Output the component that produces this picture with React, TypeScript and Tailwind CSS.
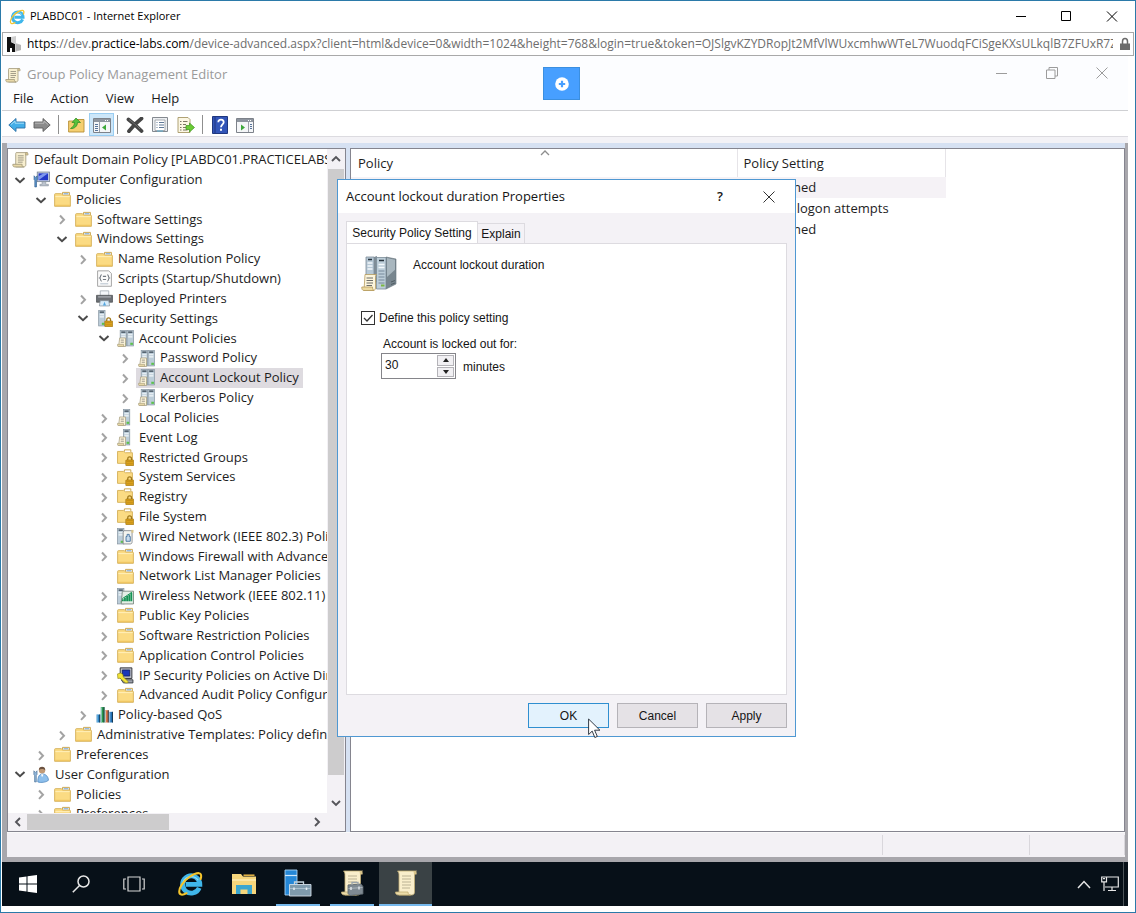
import React, { useState } from "react";
import clsx from "clsx";

type IconProps = { className?: string };

const IeIcon = ({ className }: IconProps) => (
  <svg viewBox="0 0 24 24" className={className} fill="none">
    <path d="M20.5 15.5a8 8 0 1 1 .6-3.2H8" stroke="#3fb6ea" strokeWidth="4.400" />
    <path d="M5.5 10.5a8 8 0 0 1 14-2" stroke="#8fdcf8" strokeWidth="1.2" />
    <path
      d="M21.8 7.5c1-3.200.6-5.300-1.500-5.500C16 1.600 8 7 4.300 12.800c-2.800 4.400-3 8.400-.4 9 1.400.3 3.200-.3 5-1.300"
      stroke="#f5c52c"
      strokeWidth="1.9"
      strokeLinecap="round"
    />
  </svg>
);

const SiteIcon = () => (
  <svg viewBox="0 0 16 16" className="size-4">
    <path d="M1 1h4v5l4 2v8H6v-4H4v4H1z" fill="#111" />
    <path d="M5 1l5-1v7l5 2v5l-6 2V8L5 6z" fill="#cfcfcf" />
    <path d="M10 8l5 1v5l-5 1z" fill="#b5b5b5" />
  </svg>
);

const ScrollIcon = ({ className }: IconProps) => (
  <svg viewBox="0 0 16 16" className={className}>
    <path d="M4 1.500h10.500c-1 .3-1.500 1.200-1.500 2V13c0 1-.8 2-2 2H3.500V3C3.500 2 3.600 1.600 4 1.500z" fill="#f8efcf" stroke="#a39a7c" strokeWidth=".8" />
    <path d="M12.800 1.500c1.800-.3 2.600.6 2.300 2.300h-2.300z" fill="#d9c68f" stroke="#a39a7c" strokeWidth=".6" />
    <path d="M.8 12.500h8.700c-.3 1.500.4 2.300 1.500 2.500H2.500C1.200 15 .6 14 .8 12.500z" fill="#e9d9a8" stroke="#a39a7c" strokeWidth=".8" />
    <path d="M5.500 4.500H11M5.500 6.500H11M5.500 8.500H11M5.500 10.500H10" stroke="#8f8a7a" strokeWidth=".8" />
  </svg>
);

const FolderIcon = ({ className }: IconProps) => (
  <svg viewBox="0 0 16 16" className={className}>
    <path d="M8 3.500V1.300h6.500V4" fill="#fff" stroke="#c9a54d" strokeWidth=".9" />
    <path d="M.6 14.400V3.200c0-.4.3-.7.7-.7h5.500l1.500 1.300h6.400c.4 0 .7.3.7.7v9.900z" fill="#fbdb83" stroke="#d6b25c" strokeWidth=".9" />
    <path d="M9 2.600h4.500" stroke="#7aa7d6" />
    <path d="M1.300 5.300h13.500" stroke="#fff0bd" strokeWidth=".9" />
    <path d="M1 13.500h14" stroke="#efc45f" />
  </svg>
);

const Lock = () => (
  <>
    <path d="M10.100 11V9.300c0-2.600 3.600-2.600 3.600 0V11" fill="none" stroke="#a07a1c" strokeWidth="1.200" />
    <rect x="8.300" y="10.400" width="7.400" height="5.300" rx=".5" fill="#e5a91e" stroke="#94690c" strokeWidth=".6" />
    <path d="M9 12h6M9 14h6" stroke="#ad7d12" strokeWidth=".7" />
  </>
);

const LockedFolderIcon = ({ className }: IconProps) => (
  <svg viewBox="0 0 16 16" className={className}>
    <path d="M7 2.500V.8h6v2" fill="#fff" stroke="#c9a54d" strokeWidth=".9" />
    <path d="M.5 13.500V2.300h5.800l1.500 1.200h6.700v10z" fill="#fbdb83" stroke="#d6b25c" strokeWidth=".9" />
    <Lock />
  </svg>
);

const Tower = ({ x, y = 0 }: { x: number; y?: number }) => (
  <>
    <rect x={x + 0.5} y={y + 0.5} width="6" height="14.500" fill="#bccdd9" stroke="#8a99a4" strokeWidth=".7" />
    <path d={`M${x + 1.5} ${y + 2}h4`} stroke="#37444f" strokeWidth="1.200" />
    <path d={`M${x + 1.5} ${y + 4.500}h4M${x + 1.5} ${y + 6.500}h4`} stroke="#f2f7fa" strokeWidth="1.100" />
    <path d={`M${x + 3.5} ${y + 13}h2.500`} stroke="#5cc04d" strokeWidth="2" />
  </>
);

const Sheet = () => (
  <>
    <path d="M2.500 7.500h5.500v8H1.500z" fill="#fbf3da" stroke="#a89f80" strokeWidth=".7" />
    <path d="M.4 13.500h5.800v2H1c-.5 0-.6-1-.6-2z" fill="#e8d8a6" stroke="#a89f80" strokeWidth=".6" />
    <path d="M3.500 9.500h3M3.500 11.500h3" stroke="#8d8a80" strokeWidth=".8" />
  </>
);

const ServersIcon = ({ className }: IconProps) => (
  <svg viewBox="0 0 16 16" className={className}>
    <Tower x={2.5} />
    <Tower x={9} />
    <Sheet />
  </svg>
);

const ServerIcon = ({ className }: IconProps) => (
  <svg viewBox="0 0 16 16" className={className}>
    <Tower x={5.5} />
    <Sheet />
  </svg>
);

const ServerLockIcon = ({ className }: IconProps) => (
  <svg viewBox="0 0 16 16" className={className}>
    <Tower x={2} />
    <Lock />
  </svg>
);

const ComputerIcon = ({ className }: IconProps) => (
  <svg viewBox="0 0 16 16" className={className}>
    <rect x="4" y="1" width="11.500" height="9" fill="#c9d3e2" stroke="#7c8797" strokeWidth=".8" />
    <rect x="5.200" y="2.200" width="9" height="6.500" fill="#2439c8" />
    <path d="M5.200 8.700V5l5-2.800h4z" fill="#7f98ee" />
    <path d="M8.500 10h3.500v2.500h2.500V14H6.500v-1.500h2z" fill="#bcc4ce" stroke="#858d98" strokeWidth=".5" />
    <path d="M1 4.500l1.500 1.500L4 4.500V8L3.300 9v6H1.700V9L1 8z" fill="#5c93c9" stroke="#2d5d8e" strokeWidth=".6" />
  </svg>
);

const UserIcon = ({ className }: IconProps) => (
  <svg viewBox="0 0 16 16" className={className}>
    <circle cx="8.500" cy="4" r="3" fill="#c09a77" />
    <path d="M5.500 3.800C5.500-.4 11.700-.4 11.500 4 10 2.500 7 2.500 5.500 3.800z" fill="#6a5140" />
    <path d="M4.500 15c0-5 1.500-7.500 4.500-7.500s5.500 2.500 5.500 6c-2 2-7.500 2.500-10 1.500z" fill="#8dbfec" stroke="#4b84bb" strokeWidth=".7" />
    <path d="M7.500 7.700l1 3 1.500-3z" fill="#fff" />
    <path d="M.8 4.500l1.500 1.500 1.500-1.500V8l-.7 1v6H1.500V9L.8 8z" fill="#8fb4d8" stroke="#4c7196" strokeWidth=".6" />
  </svg>
);

const ScriptIcon = ({ className }: IconProps) => (
  <svg viewBox="0 0 16 16" className={className} fill="none">
    <path d="M1.500.8h10.500L14.500 3.300v12h-13z" fill="#fbfbfb" stroke="#a3a3a3" strokeWidth=".9" />
    <path d="M5.500 4.500c-1.800 0-.8 2.500-2 3 1.200.5.2 3 2 3M10.500 4.500c1.800 0 .8 2.500 2 3-1.200.5-.2 3-2 3" stroke="#737981" />
    <path d="M6.500 6h3M6.500 9h3" stroke="#737981" />
    <path d="M4 13h7.500" stroke="#b9c4cf" />
  </svg>
);

const PrinterIcon = ({ className }: IconProps) => (
  <svg viewBox="0 0 16 16" className={className}>
    <path d="M4 .8h8V6H4z" fill="#f4f7fa" stroke="#9ba4ad" strokeWidth=".7" />
    <path d="M.5 5h15v6.500H.5z" fill="#6c7075" stroke="#4a4d51" strokeWidth=".7" />
    <path d="M2 6.500h12" stroke="#b7bbc0" />
    <path d="M4 10h8l.8 5H3.200z" fill="#d8ecfa" stroke="#88939d" strokeWidth=".7" />
    <path d="M8 11l1.500 3.500H6.500z" fill="#55a6e0" />
  </svg>
);

const WiredIcon = ({ className }: IconProps) => (
  <svg viewBox="0 0 16 16" className={className}>
    <Tower x={0} />
    <path d="M6.500 2.500h8.300c-.6.600-.6 1.500-.6 2V13c0 1.300-.6 2-1.700 2H5.800V4z" fill="#f4f4ef" stroke="#83878b" strokeWidth=".8" />
    <path d="M13.500 1.800h2v2.700h-2z" fill="#d8c48b" />
    <path d="M8.500 12.500V8h1V6h2v2h1v4.500z" fill="#c9dced" stroke="#4c78a5" strokeWidth=".9" />
  </svg>
);

const WirelessIcon = ({ className }: IconProps) => (
  <svg viewBox="0 0 16 16" className={className}>
    <Tower x={0} />
    <path d="M5 3h10.500v12H4z" fill="#e4eee6" stroke="#74827a" strokeWidth=".8" />
    <path d="M5.500 12.500v-2M7.500 12.500V9M9.500 12.500V7.500M11.500 12.500V6M13.500 12.500V4.500" stroke="#159354" strokeWidth="1.700" />
    <path d="M5 10l9-6" stroke="#159354" strokeWidth=".9" />
  </svg>
);

const IpSecIcon = ({ className }: IconProps) => (
  <svg viewBox="0 0 16 16" className={className}>
    <path d="M3 .8h11v10H3z" fill="#b9bdc6" stroke="#33363c" strokeWidth=".9" />
    <path d="M5 2.800h7v5.700H5z" fill="#1a37b8" stroke="#0c1a55" strokeWidth=".7" />
    <path d="M4 12h11v3H6z" fill="#9ea3ad" stroke="#33363c" strokeWidth=".8" />
    <path d="M.5 6.500l3-.8 2.300 1.600-.2 1.700 5 4.800-.8 1.200-2-.2-5-4.300-2 .3z" fill="#f4e53a" stroke="#8c8210" strokeWidth=".6" />
  </svg>
);

const BarsIcon = ({ className }: IconProps) => (
  <svg viewBox="0 0 16 16" className={className}>
    <path d="M.5 8h3.500v7.500H.5z" fill="#2d86c9" />
    <path d="M4.500 1H8v14.500H4.500z" fill="#2b9a48" />
    <path d="M8.500 4H12v11.500H8.500z" fill="#e2733f" />
    <path d="M12.500 5.500H16v10h-3.500z" fill="#2272b8" />
    <path d="M3.500 8v7.500M7.500 1v14.500M11.500 4v11.500M15.500 5.500v10" stroke="#17354a" strokeWidth=".9" />
    <path d="M1 8.300v7M5 1.300v14M9 4.300v11M13 5.800v9.500" stroke="#b5dcf0" strokeWidth=".7" />
  </svg>
);

const Chevron = ({ open, className }: { open?: boolean; className?: string }) => (
  <svg viewBox="0 0 12 12" className={clsx("size-3", className)} fill="none">
    {open ? (
      <path d="M1.500 4L6 8.200 10.500 4" stroke="#4a4a4a" strokeWidth="2" />
    ) : (
      <path d="M4 2.500l4 4.200-4 4.200" stroke="#a3a3a3" strokeWidth="2" />
    )}
  </svg>
);

const Arrow = ({ d }: { d: string }) => (
  <svg viewBox="0 0 12 12" className="size-3" fill="none">
    <path d={d} stroke="#55555a" strokeWidth="1.900" />
  </svg>
);

type Node = {
  label: string;
  level: number;
  icon: (p: IconProps) => React.ReactElement;
  state?: "open" | "closed";
};

const nodes: Node[] = [
  { label: "Default Domain Policy [PLABDC01.PRACTICELABS.COM]", level: 0, icon: ScrollIcon },
  { label: "Computer Configuration", level: 1, icon: ComputerIcon, state: "open" },
  { label: "Policies", level: 2, icon: FolderIcon, state: "open" },
  { label: "Software Settings", level: 3, icon: FolderIcon, state: "closed" },
  { label: "Windows Settings", level: 3, icon: FolderIcon, state: "open" },
  { label: "Name Resolution Policy", level: 4, icon: FolderIcon, state: "closed" },
  { label: "Scripts (Startup/Shutdown)", level: 4, icon: ScriptIcon },
  { label: "Deployed Printers", level: 4, icon: PrinterIcon, state: "closed" },
  { label: "Security Settings", level: 4, icon: ServerLockIcon, state: "open" },
  { label: "Account Policies", level: 5, icon: ServersIcon, state: "open" },
  { label: "Password Policy", level: 6, icon: ServersIcon, state: "closed" },
  { label: "Account Lockout Policy", level: 6, icon: ServersIcon, state: "closed" },
  { label: "Kerberos Policy", level: 6, icon: ServersIcon, state: "closed" },
  { label: "Local Policies", level: 5, icon: ServerIcon, state: "closed" },
  { label: "Event Log", level: 5, icon: ServerIcon, state: "closed" },
  { label: "Restricted Groups", level: 5, icon: LockedFolderIcon, state: "closed" },
  { label: "System Services", level: 5, icon: LockedFolderIcon, state: "closed" },
  { label: "Registry", level: 5, icon: LockedFolderIcon, state: "closed" },
  { label: "File System", level: 5, icon: LockedFolderIcon, state: "closed" },
  { label: "Wired Network (IEEE 802.3) Policies", level: 5, icon: WiredIcon, state: "closed" },
  { label: "Windows Firewall with Advanced Security", level: 5, icon: FolderIcon, state: "closed" },
  { label: "Network List Manager Policies", level: 5, icon: FolderIcon },
  { label: "Wireless Network (IEEE 802.11) Policies", level: 5, icon: WirelessIcon, state: "closed" },
  { label: "Public Key Policies", level: 5, icon: FolderIcon, state: "closed" },
  { label: "Software Restriction Policies", level: 5, icon: FolderIcon, state: "closed" },
  { label: "Application Control Policies", level: 5, icon: FolderIcon, state: "closed" },
  { label: "IP Security Policies on Active Directory", level: 5, icon: IpSecIcon, state: "closed" },
  { label: "Advanced Audit Policy Configuration", level: 5, icon: FolderIcon, state: "closed" },
  { label: "Policy-based QoS", level: 4, icon: BarsIcon, state: "closed" },
  { label: "Administrative Templates: Policy definitions", level: 3, icon: FolderIcon, state: "closed" },
  { label: "Preferences", level: 2, icon: FolderIcon, state: "closed" },
  { label: "User Configuration", level: 1, icon: UserIcon, state: "open" },
  { label: "Policies", level: 2, icon: FolderIcon, state: "closed" },
  { label: "Preferences", level: 2, icon: FolderIcon, state: "closed" },
];

const indent = ["pl-[2px]", "pl-[2px]", "pl-[23px]", "pl-[44px]", "pl-[65px]", "pl-[86px]", "pl-[107px]"];

const settings = ["Not Defined", "0 invalid logon attempts", "Not Defined"];

const BrowserBar = () => (
  <>
    <div className="flex h-[31px] shrink-0 items-center bg-white pl-2 text-black">
      <IeIcon className="size-4" />
      <span className="ml-[5px] flex-1 text-[11px]">PLABDC01 - Internet Explorer</span>
      <button aria-label="Minimize" className="flex h-full w-[45px] items-center justify-center">
        <svg viewBox="0 0 12 12" className="size-3"><path d="M1 5.500h10" stroke="#000" /></svg>
      </button>
      <button aria-label="Maximize" className="flex h-full w-[46px] items-center justify-center">
        <svg viewBox="0 0 12 12" className="size-3"><path d="M1.500.5h9v9h-9z" stroke="#000" fill="none" /></svg>
      </button>
      <button aria-label="Close" className="flex h-full w-[46px] items-center justify-center">
        <svg viewBox="0 0 12 12" className="size-3"><path d="M1 .5l10 10M11 .5L1 10.500" stroke="#000" /></svg>
      </button>
    </div>
    <div className="mx-px flex h-6 shrink-0 items-center border border-[#a9a9a9] bg-white pr-[2px] pl-[3px]">
      <SiteIcon />
      <div className="ml-[5px] flex-1 overflow-hidden pb-px text-[12px] whitespace-nowrap text-[#6e6e6e]">
        <span className="text-black">https</span>://dev.<span className="text-black">practice-labs.com</span>
        /device-advanced.aspx?client=html&amp;device=0&amp;width=1024&amp;height=768&amp;login=true&amp;token=OJSlgvKZYDRopJt2MfVlWUxcmhwWTeL7WuodqFCiSgeKXsULkqlB7ZFUxR7ZYOgV
      </div>
      <svg viewBox="0 0 12 14" className="ml-[6px] h-[14px] w-3">
        <path d="M3.500 7V4.500c0-4 5-4 5 0V7" fill="none" stroke="#6b6b6b" strokeWidth="1.500" />
        <path d="M1 6.500h10V13H1z" fill="#6b6b6b" />
      </svg>
    </div>
  </>
);

const EditorHeader = () => (
  <div className="relative shrink-0 border-b border-[#cfd0d3] bg-[#fcfdff]">
    <div className="flex h-8 items-center pt-[5px] pl-[3px]">
      <ScrollIcon className="size-4" />
      <span className="ml-[6px] flex-1 text-[13px] text-[#9a9a9a]">Group Policy Management Editor</span>
      <div className="flex gap-[38px] pr-5 pb-1">
        <button aria-label="Minimize editor">
          <svg viewBox="0 0 12 12" className="size-3"><path d="M0 6.500h11" stroke="#9c9c9c" /></svg>
        </button>
        <button aria-label="Restore editor">
          <svg viewBox="0 0 12 12" className="size-3" fill="none" stroke="#9c9c9c">
            <path d="M.5 3h8.500v8.500H.500zM3 3V.5h8.500V9H9" />
          </svg>
        </button>
        <button aria-label="Close editor">
          <svg viewBox="0 0 12 12" className="size-3"><path d="M.5.5l11 11M11.500.5l-11 11" stroke="#9c9c9c" /></svg>
        </button>
      </div>
    </div>
    <div className="flex h-[22px] items-center gap-[17px] pl-[11px] text-[13px] text-[#1b1b1b]">
      <button>File</button>
      <button>Action</button>
      <button>View</button>
      <button>Help</button>
    </div>
    <button
      aria-label="Show controls"
      className="absolute top-[11px] left-[541px] flex h-[33px] w-[37px] items-center justify-center border border-[#3b8fe0] bg-[#479fff]"
    >
      <svg viewBox="0 0 14 14" className="size-[14px]">
        <circle cx="7" cy="7" r="6.800" fill="#fff" />
        <path d="M7 3.800v6.400M3.800 7h6.400" stroke="#479fff" strokeWidth="2.200" />
      </svg>
    </button>
  </div>
);

const Separator = () => <div className="h-[19px] w-px bg-[#8f8f8f]" />;

const PaneIcon = ({ flip }: { flip?: boolean }) => (
  <svg viewBox="0 0 18 16" className="h-4 w-[18px]">
    <path d="M.5 1.500h17v14H.5z" fill="#f5f6f8" stroke="#7d828a" />
    <path d="M1 2h16v3H1z" fill="#8e959f" />
    <path d="M12 3.500h1M14 3.500h1" stroke="#fff" />
    {flip ? (
      <>
        <path d="M12.500 5v10" stroke="#9ba0a8" />
        <path d="M14 7.500h2M14 9.500h2M14 11.500h2" stroke="#57749b" />
        <path d="M5 7.500v6l4-3z" fill="#3ea83a" />
      </>
    ) : (
      <>
        <path d="M6.500 5v10" stroke="#9ba0a8" />
        <path d="M2 7.500h3M2 9.500h3M2 11.500h3M2 13.500h3" stroke="#57749b" />
        <path d="M13 7.500v6l-4-3z" fill="#3ea83a" />
      </>
    )}
  </svg>
);

const Toolbar = () => (
  <div className="flex h-[26px] shrink-0 items-center border-b border-[#dcdbe0] bg-white pt-[2px] pl-[6px]">
    <button aria-label="Back">
      <svg viewBox="0 0 18 16" className="h-4 w-[18px]">
        <path d="M.8 8L8 1.500V5h9v6H8v3.500z" fill="#43aee8" stroke="#2a6fa6" strokeWidth=".9" />
        <path d="M3 7.500L7 4v2.200h9" fill="none" stroke="#a5def8" />
      </svg>
    </button>
    <button aria-label="Forward" className="ml-[7px]">
      <svg viewBox="0 0 18 16" className="h-4 w-[18px]">
        <path d="M17.200 8L10 1.500V5H1v6h9v3.500z" fill="#8b8b8b" stroke="#5e5e5e" strokeWidth=".9" />
        <path d="M2 6.200h9V4l4 3.500" fill="none" stroke="#b9b9b9" />
      </svg>
    </button>
    <div className="ml-[7px]"><Separator /></div>
    <button aria-label="Up one level" className="ml-[9px]">
      <svg viewBox="0 0 17 16" className="h-4 w-[17px]">
        <path d="M.6 15V4h6l1.500-1.500H16V15z" fill="#f5cf70" stroke="#b78f35" strokeWidth=".9" />
        <path d="M2.500 11.500C5 10 6.500 8 6.500 5.500H4L8 1l4.500 4.500h-3C9.500 9 6.500 12 2.500 11.500z" fill="#58c13c" stroke="#2b8a1f" strokeWidth=".7" />
      </svg>
    </button>
    <button
      aria-label="Show or hide console tree"
      className="ml-[4px] flex h-[23px] w-[25px] items-center justify-center border border-[#99cdf2] bg-[#cce6f9]"
    >
      <PaneIcon />
    </button>
    <div className="ml-[3px]"><Separator /></div>
    <button aria-label="Delete" className="ml-[8px]">
      <svg viewBox="0 0 18 16" className="h-4 w-[18px]">
        <path d="M2.500 2.500c4 3 8 6.500 13 11.500M15.500 1.500C11 5 7 9 3 14.200" stroke="#454545" strokeWidth="3.800" strokeLinecap="round" />
        <path d="M3 2.500c4 3 7 5.500 11 9.500" stroke="#7a7a7a" strokeWidth=".9" />
      </svg>
    </button>
    <button aria-label="Properties" className="ml-[8px]">
      <svg viewBox="0 0 16 16" className="size-4" fill="none">
        <path d="M.5.500h15v14H.5z" fill="#eceef1" stroke="#84898f" />
        <path d="M3 3h10v10.500H3z" fill="#fff" stroke="#93989e" strokeWidth=".8" />
        <path d="M4.500 5.500h1M7 5.500h5M4.500 8h1M7 8h5M4.500 10.500h1M7 10.500h5" stroke="#5f7896" />
        <path d="M5 14h6" stroke="#6bb9d9" />
      </svg>
    </button>
    <button aria-label="Export list" className="ml-[9px]">
      <svg viewBox="0 0 18 16" className="h-4 w-[18px]">
        <path d="M1 .5h10l2 2v13H1z" fill="#fcf7e4" stroke="#a79766" strokeWidth=".9" />
        <path d="M3 4.500h1.500M6 4.500h4.500M3 7.500h1.500M6 7.500h3M3 10.500h1.500M6 10.500h3M3 13h1.500M6 13h4.500" stroke="#7b7762" />
        <path d="M9 8.500h3.500V6l5 4.500-5 4.500v-2.500H9z" fill="#6bcb35" stroke="#3c941c" strokeWidth=".7" />
      </svg>
    </button>
    <div className="ml-[7px]"><Separator /></div>
    <button aria-label="Help topics" className="ml-[9px]">
      <svg viewBox="0 0 16 18" className="h-[18px] w-4" fill="none">
        <path d="M.5.500h15v17H.5z" fill="#3255b8" stroke="#1f377f" />
        <path d="M3 1v16" stroke="#1f377f" />
        <path d="M6.300 6.200c0-3.400 5.400-3.200 5.400 0 0 2-2.700 2.300-2.700 5" stroke="#fff" strokeWidth="1.800" />
        <path d="M9 12.800v2" stroke="#fff" strokeWidth="2" />
      </svg>
    </button>
    <button aria-label="Show or hide action pane" className="ml-[8px]">
      <PaneIcon flip />
    </button>
  </div>
);

const TreePane = () => {
  const [selected, setSelected] = useState("Account Lockout Policy");

  return (
    <div className="flex w-[339px] shrink-0 border border-[#85858f] bg-white">
      <div className="flex min-w-0 flex-1 flex-col">
        <div className="min-h-0 flex-1 overflow-hidden pt-px">
          <ul className="grid h-[674px] auto-rows-fr">
            {nodes.map((node, i) => {
              const Icon = node.icon;
              const isSelected = node.label === selected;
              return (
                <li key={i} className={clsx("flex min-h-0 items-center", indent[node.level])}>
                  {node.level > 0 && (
                    <span className="flex w-[21px] shrink-0 justify-center pr-px">
                      {node.state && <Chevron open={node.state === "open"} />}
                    </span>
                  )}
                  <button
                    onClick={() => setSelected(node.label)}
                    className={clsx(
                      "flex h-5 items-center gap-[5px] pr-1 pl-[2px] text-[13px] whitespace-nowrap text-[#1d1d1d]",
                      isSelected && "bg-[#dedbe0]",
                    )}
                  >
                    <Icon className="size-[17px] shrink-0" />
                    {node.label}
                  </button>
                </li>
              );
            })}
          </ul>
        </div>
        <div className="flex h-[18px] shrink-0 items-center bg-[#f3f1f5]">
          <button aria-label="Scroll left" className="flex w-[19px] justify-center">
            <Arrow d="M8 2L4 6l4 4" />
          </button>
          <div className="h-4 w-[142px] bg-[#cdcccd]" />
          <div className="flex-1" />
          <button aria-label="Scroll right" className="flex w-[21px] justify-center">
            <Arrow d="M4 2l4 4-4 4" />
          </button>
        </div>
      </div>
      <div className="flex w-[18px] shrink-0 flex-col items-center bg-[#f3f1f5] pb-[19px]">
        <button aria-label="Scroll up" className="flex h-5 items-center">
          <Arrow d="M2 8l4-4 4 4" />
        </button>
        <div className="w-4 flex-1 bg-[#cdcccd]" />
        <div className="h-[18px]" />
        <button aria-label="Scroll down" className="flex h-[19px] items-center">
          <Arrow d="M2 4l4 4 4-4" />
        </button>
      </div>
    </div>
  );
};

const PolicyPane = () => (
  <div className="relative min-w-0 flex-1 border border-[#85858f] bg-white">
    <table className="w-[595px] table-fixed text-left text-[13px] text-[#1d1d1d]">
      <thead>
        <tr className="h-7">
          <th className="w-[386px] border-r border-[#e6e4e8] pt-[2px] pl-[7px] font-normal">Policy</th>
          <th className="border-r border-[#e6e4e8] pt-[2px] pl-[6px] font-normal">Policy Setting</th>
        </tr>
      </thead>
      <tbody>
        {settings.map((setting, i) => (
          <tr key={i} className={clsx("h-[21px]", i === 0 && "bg-[#f5f2f6]")}>
            <td />
            <td className="pb-[2px] pl-[6px] leading-4">{setting}</td>
          </tr>
        ))}
      </tbody>
    </table>
    <svg viewBox="0 0 10 6" className="absolute top-px left-[189px] h-[6px] w-[10px]" fill="none">
      <path d="M1 5l4-4 4 4" stroke="#8d8d8d" strokeWidth="1.300" />
    </svg>
  </div>
);

const BigServersIcon = () => (
  <svg viewBox="0 0 36 36" className="size-9">
    <path d="M5 2h8v26H5z" fill="#b7c9d6" stroke="#7b8b97" strokeWidth=".8" />
    <path d="M13 2l3-1v26l-3 1z" fill="#7f8d97" />
    <path d="M25 2l10 2v25l-10 5z" fill="#78868f" stroke="#66737c" strokeWidth=".6" />
    <path d="M15.500 2.500H25V34h-9.500z" fill="#bdced9" stroke="#7b8b97" strokeWidth=".8" />
    <path d="M26 3l8 1.800v10L26 22z" fill="#a9b7bf" />
    <path d="M7 4.500h4M18 5.500h5" stroke="#28343d" strokeWidth="1.500" />
    <path d="M6.500 8h5M6.500 11h5M6.500 14h5M17.500 9.500h6M17.500 12.500h6" stroke="#f3f8fb" strokeWidth="1.500" />
    <path d="M17.500 16h6M17.500 19h6M17.500 22h6M17.500 25h6M17.500 28h6" stroke="#76889a" />
    <path d="M20 30.500h3.500" stroke="#7cb842" strokeWidth="2" />
    <path d="M30 27l4-1.500M30 29.500l4-1.500" stroke="#4c575e" strokeWidth=".9" />
    <path d="M4 19.500h11.500c-1 1-1 2-1 3V33c0 1.500-1 2.500-2 2.500H3z" fill="#fcf5dc" stroke="#b59a5d" strokeWidth=".8" />
    <path d="M.8 32h10.700c0 2 .7 3 1.500 3.500H3C1.300 35.500.6 34 .8 32z" fill="#ecd9a0" stroke="#b59a5d" strokeWidth=".8" />
    <path d="M5.500 23H12M5.500 25.500H12M5.500 28H12M5.500 30.500H11" stroke="#6c6c68" />
  </svg>
);

const PropertiesDialog = () => {
  const [defined, setDefined] = useState(true);
  const [minutes, setMinutes] = useState(30);

  const buttonClass = "h-[25px] w-[81px] border text-[12px]";

  return (
    <div
      role="dialog"
      aria-label="Account lockout duration Properties"
      className="absolute top-[123px] left-[335px] flex h-[558px] w-[459px] flex-col border border-[#4f98d2] bg-[#f4f2f6] font-['Liberation_Sans',Arial,sans-serif] text-[12px] text-[#151515]"
    >
      <div className="flex h-[33px] shrink-0 items-center bg-white pl-2 font-['Open_Sans','Noto_Sans',sans-serif] text-[13px]">
        <span className="flex-1">Account lockout duration Properties</span>
        <button aria-label="Help" className="w-10 text-[13px] font-semibold">?</button>
        <button aria-label="Close dialog" className="mr-[10px] ml-[13px] flex w-8 items-center justify-center">
          <svg viewBox="0 0 12 12" className="size-3"><path d="M.5.5l11 11M11.500.5l-11 11" stroke="#333" /></svg>
        </button>
      </div>

      <div className="flex min-h-0 flex-1 flex-col px-2 pt-2 pb-2">
        <div role="tablist" className="flex h-[22px] shrink-0 items-end">
          <button role="tab" aria-selected="true" className="-mb-px h-[23px] w-[132px] border border-b-0 border-[#dddbe0] bg-white pb-px">
            Security Policy Setting
          </button>
          <button role="tab" aria-selected="false" className="h-5 w-[47px] border border-b-0 border-l-0 border-[#dddbe0]">
            Explain
          </button>
        </div>
        <div className="min-h-0 flex-1 border border-[#dddbe0] bg-white px-[14px] pt-[11px]">
          <div className="flex">
            <BigServersIcon />
            <span className="ml-4 pt-px">Account lockout duration</span>
          </div>
          <label className="mt-[19px] flex h-4 items-center gap-1">
            <span className="relative flex">
              <input
                type="checkbox"
                checked={defined}
                onChange={(e) => setDefined(e.target.checked)}
                className="size-[14px] appearance-none border border-[#333] bg-white"
              />
              {defined && (
                <svg viewBox="0 0 14 14" className="pointer-events-none absolute inset-0 size-[14px]" fill="none">
                  <path d="M3 7l3 3 5.500-6" stroke="#333" strokeWidth="1.300" />
                </svg>
              )}
            </span>
            Define this policy setting
          </label>
          <div className="mt-[10px] pl-5">
            <label htmlFor="minutes" className="block pl-[2px] leading-4">
              Account is locked out for:
            </label>
            <div className="mt-px flex items-center">
              <div className="flex h-[26px] w-[75px] border border-[#85858a] bg-white p-px">
                <input
                  id="minutes"
                  type="text"
                  value={minutes}
                  onChange={(e) => setMinutes(Number(e.target.value) || 0)}
                  className="w-0 flex-1 pb-[3px] pl-[2px] outline-none"
                />
                <div className="flex w-[17px] flex-col gap-px">
                  <button
                    aria-label="Increase"
                    onClick={() => setMinutes(minutes + 1)}
                    className="flex flex-1 items-center justify-center border border-[#b4b3b8] bg-[#f1f0f3]"
                  >
                    <svg viewBox="0 0 6 4" className="h-1 w-[6px]"><path d="M0 4l3-4 3 4z" fill="#222" /></svg>
                  </button>
                  <button
                    aria-label="Decrease"
                    onClick={() => setMinutes(Math.max(0, minutes - 1))}
                    className="flex flex-1 items-center justify-center border border-[#b4b3b8] bg-[#f1f0f3]"
                  >
                    <svg viewBox="0 0 6 4" className="h-1 w-[6px]"><path d="M0 0h6L3 4z" fill="#222" /></svg>
                  </button>
                </div>
              </div>
              <span className="ml-[7px] pt-px">minutes</span>
            </div>
          </div>
        </div>
        <div className="mt-2 flex shrink-0 justify-end gap-2">
          <button className={clsx(buttonClass, "border-[#2f8fd0] bg-[#e3f2fd]")}>OK</button>
          <button className={clsx(buttonClass, "border-[#b5b3b8] bg-[#e5e2e6]")}>Cancel</button>
          <button className={clsx(buttonClass, "border-[#b5b3b8] bg-[#e5e2e6]")}>Apply</button>
        </div>
      </div>
    </div>
  );
};

const TaskScroll = ({ tools }: { tools?: boolean }) => (
  <svg viewBox="0 0 26 26" className="size-[26px]">
    <path d="M4.500 1h19c-2 1-2 2.500-2 4v17c0 2-1 3-3 3H6V6C6 4 6 2 4.500 1z" fill="#f9eecb" stroke="#c3ae75" strokeWidth=".8" />
    <path d="M20.500 1c3-.5 3.500 1.500 3 3.500h-2.500z" fill="#d9c48a" />
    <path d="M2.500 22h12.500c0 2 1 3 2.500 3H6c-2.500 0-3.700-1-3.500-3z" fill="#ecdca9" stroke="#c3ae75" strokeWidth=".8" />
    <path d="M9 6h9M9 9h9M9 12h9M9 15h9M9 18h8" stroke="#b3aa8e" strokeWidth=".9" />
    {tools && (
      <>
        <path d="M9 15l13-1 2 2.500V24l-13 1.500-2-2z" fill="#7f8a92" stroke="#5c666d" strokeWidth=".8" />
        <path d="M13 15v-2.500h6V14.500" fill="none" stroke="#9aa4ab" strokeWidth="1.300" />
        <path d="M9.500 18.500l14-1" stroke="#a9b3ba" />
        <path d="M12 17v3M20 16.500v3" stroke="#dfe5e9" strokeWidth="1.500" />
      </>
    )}
  </svg>
);

const Taskbar = () => (
  <div className="flex h-11 shrink-0 items-stretch bg-[#071018]">
    <div className="flex">
      <button aria-label="Start" className="flex w-[52px] items-center justify-center">
        <svg viewBox="0 0 18 18" className="size-[18px]" fill="#fff">
          <path d="M0 2.500l7.500-1v7H0zM8.500 1.300L18 0v8.500H8.500zM0 9.500h7.500v7l-7.500-1zM8.500 9.500H18V18l-9.500-1.300z" />
        </svg>
      </button>
      <button aria-label="Search" className="flex w-[54px] items-center justify-center">
        <svg viewBox="0 0 18 18" className="size-[18px]" fill="none" stroke="#e8e8e8" strokeWidth="1.500">
          <circle cx="11.500" cy="6.500" r="5.500" />
          <path d="M7.500 10.500L.8 17.200" />
        </svg>
      </button>
      <button aria-label="Task view" className="flex w-[52px] items-center justify-center">
        <svg viewBox="0 0 22 16" className="h-4 w-[22px]" fill="none" stroke="#d5d5d5" strokeWidth="1.200">
          <path d="M5 1h12v14H5zM3 3H.8v10H3M19 3h2.200v10H19" />
        </svg>
      </button>
    </div>
    <div className="ml-[3px] flex">
      <button aria-label="Internet Explorer" className="flex w-[54px] items-center justify-center">
        <IeIcon className="size-[26px]" />
      </button>
      <button aria-label="File Explorer" className="flex w-[54px] items-center justify-center">
        <svg viewBox="0 0 24 20" className="h-5 w-6">
          <path d="M0 0h9l2 2.500h13V20H0z" fill="#f6d67c" />
          <path d="M0 5h24v2H0z" fill="#fbe6a5" />
          <path d="M11.500 1.200h11" stroke="#e9b847" strokeWidth="1.500" />
          <path d="M4 20v-9h16v9h-4.500v-4.500h-7V20z" fill="#3ba6cf" />
        </svg>
      </button>
      <button aria-label="Server Manager" className="flex w-[54px] justify-center">
        <span className="flex w-11 items-center justify-center border-b-2 border-[#76b9ed]">
          <svg viewBox="0 0 28 28" className="size-7">
            <path d="M1 1h12v25H1z" fill="#2587d6" stroke="#a8d3f3" strokeWidth=".9" />
            <path d="M1 6.500h12" stroke="#cfe8fb" strokeWidth="1.200" />
            <path d="M10.500 15.500V13h9v2.500" fill="none" stroke="#c4d2db" strokeWidth="1.300" />
            <path d="M5.500 15.500h21.500V27H5.500z" fill="#7f9bad" stroke="#d3dee6" strokeWidth=".9" />
            <path d="M6 19.500h21" stroke="#a9bfcd" />
            <path d="M10 18.500v2.500M22.500 18.500v2.500" stroke="#e6eef3" strokeWidth="1.500" />
          </svg>
        </span>
      </button>
      <button aria-label="Group Policy Management" className="flex w-[54px] justify-center">
        <span className="flex w-11 items-center justify-center border-b-2 border-[#76b9ed]">
          <TaskScroll tools />
        </span>
      </button>
      <button
        aria-label="Group Policy Management Editor"
        className="flex w-[53px] items-center justify-center border-b-2 border-[#76b9ed] bg-[#3a4245]"
      >
        <TaskScroll />
      </button>
    </div>
    <div className="flex flex-1 items-center justify-end gap-[10px]">
      <button aria-label="Show hidden icons">
        <svg viewBox="0 0 14 9" className="h-[9px] w-[14px]" fill="none">
          <path d="M1 8l6-6.500L13 8" stroke="#e6e6e6" strokeWidth="1.500" />
        </svg>
      </button>
      <button aria-label="Network">
        <svg viewBox="0 0 18 16" className="h-4 w-[18px]" fill="none" stroke="#e6e6e6" strokeWidth="1.200">
          <path d="M5.500 1H17.300v10H4M.7 1h4.800v4.800H.7zM3 6v9M11 11v3M7 14.500h8" />
          <path d="M2 2.700h2" />
        </svg>
      </button>
      <div className="-ml-[6px] mr-1 w-px self-stretch bg-[#4c5459]" />
    </div>
  </div>
);

export default function App() {
  return (
    <div className="flex h-screen flex-col overflow-hidden border border-[#2b7aa9] bg-white font-['Open_Sans','Noto_Sans',sans-serif]">
      <BrowserBar />
      <div className="relative mr-[7px] mb-[6px] ml-px flex min-h-0 flex-1 flex-col">
        <EditorHeader />
        <Toolbar />
        <div className="h-[6px] shrink-0 bg-[#f3f2f6]" />
        <div className="flex min-h-0 flex-1 flex-col bg-[#a8a7ac] pr-[3px] pb-[5px] pl-[5px]">
          <div className="flex min-h-0 flex-1 gap-1 bg-[#d6e1f2] pt-[5px]">
            <TreePane />
            <PolicyPane />
          </div>
          <div className="flex h-[25px] shrink-0 justify-end border-t border-[#fafafa] bg-[#f3f1f5] py-[2px]">
            <div className="w-[147px] border-l border-[#d9d7dc]" />
            <div className="w-[96px] border-x border-[#d9d7dc]" />
          </div>
        </div>
        <Taskbar />
        <PropertiesDialog />
        <svg viewBox="0 0 13 21" className="pointer-events-none absolute top-[662px] left-[586px] h-[21px] w-[13px]">
          <path d="M.6 1v15.500l3.600-3.400 2.600 6.400 2.500-1.100-2.700-6.200h5.300z" fill="#fff" stroke="#1c2430" strokeWidth=".9" />
        </svg>
      </div>
    </div>
  );
}
